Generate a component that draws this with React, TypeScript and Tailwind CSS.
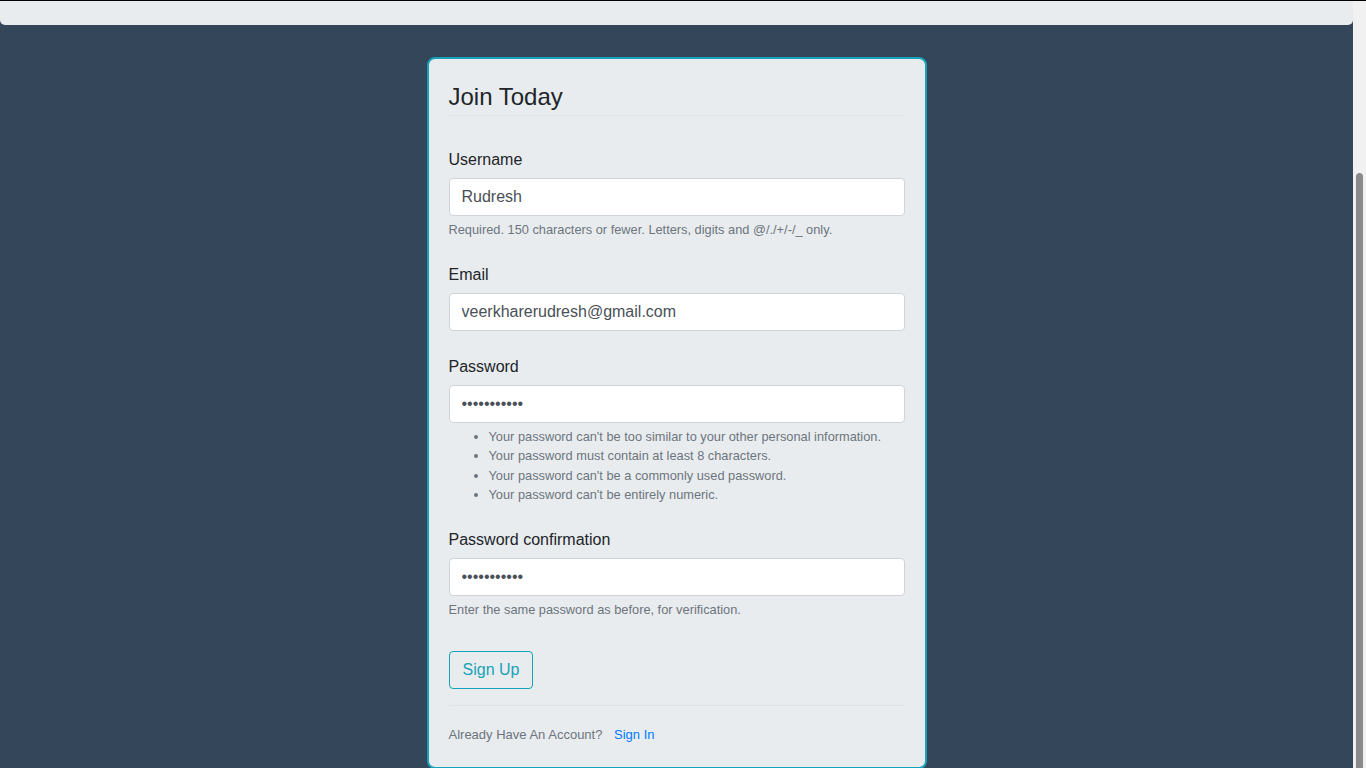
import React from 'react';

const inputClass =
  'block w-full h-[38px] px-3 bg-white border border-[#ced4da] rounded text-[16px] text-[#495057] outline-none';

const labelClass = 'block pt-px text-[16px] leading-6 text-[#212529] mb-[6px]';

const helpClass = 'mt-1 text-[12.8px] leading-[19.2px] text-[#6c757d]';

const passwordRules = [
  "Your password can't be too similar to your other personal information.",
  'Your password must contain at least 8 characters.',
  "Your password can't be a commonly used password.",
  "Your password can't be entirely numeric.",
];

export default function App() {
  return (
    <div
      className="h-screen overflow-hidden border-t border-black bg-[#33465a] flex"
      style={{ fontFamily: '"Liberation Sans", Arial, sans-serif' }}
    >
      <div className="flex-1 flex flex-col min-w-0">
        {/* top navbar remnant */}
        <div className="shrink-0 h-[24px] bg-[#e9ecef] rounded-b-[5px]" />

        <div className="shrink-0 mt-[32px] mx-auto w-[500px] border-2 border-[#17a2b8] rounded-[8px] bg-[#e9ecef] px-[20px] pt-[20px] pb-[20px]">
          <form onSubmit={(e) => e.preventDefault()}>
            <div className="h-[37px] border-b border-[#dee2e6] text-[24px] leading-[36px] text-[#212529]">
              Join Today
            </div>

            <div className="mt-[31px]">
              <label className={labelClass}>Username</label>
              <input className={inputClass} defaultValue="Rudresh" />
              <div className={helpClass}>
                Required. 150 characters or fewer. Letters, digits and @/./+/-/_ only.
              </div>
            </div>

            <div className="mt-[23px]">
              <label className={labelClass}>Email</label>
              <input className={inputClass} defaultValue="veerkharerudresh@gmail.com" />
            </div>

            <div className="mt-[23px]">
              <label className={labelClass}>Password</label>
              <input className={inputClass} type="password" defaultValue="12345678901" />
              <ul className="mt-1 pl-10 list-disc text-[12.8px] leading-[19.2px] text-[#6c757d]">
                {passwordRules.map((rule) => (
                  <li key={rule}>{rule}</li>
                ))}
              </ul>
            </div>

            <div className="mt-[23px]">
              <label className={labelClass}>Password confirmation</label>
              <input className={inputClass} type="password" defaultValue="12345678901" />
              <div className={helpClass}>Enter the same password as before, for verification.</div>
            </div>

            <button
              type="submit"
              className="mt-[32px] h-[38px] px-[13px] border border-[#17a2b8] rounded text-[16px] text-[#17a2b8] bg-transparent"
            >
              Sign Up
            </button>
          </form>

          <div className="mt-4 border-t border-[#dee2e6] pt-4 leading-6">
            <span className="text-[13px] text-[#6c757d]">
              Already Have An Account?{' '}
              <a href="#" className="ml-2 text-[#007bff]">
                Sign In
              </a>
            </span>
          </div>
        </div>
      </div>

      {/* browser scrollbar */}
      <div className="w-[13px] bg-[#f1f1f1] flex flex-col">
        <div className="mt-[172px] ml-[3px] w-[7px] flex-1 bg-[#8a8a8a] rounded-t-[4px]" />
      </div>
    </div>
  );
}
